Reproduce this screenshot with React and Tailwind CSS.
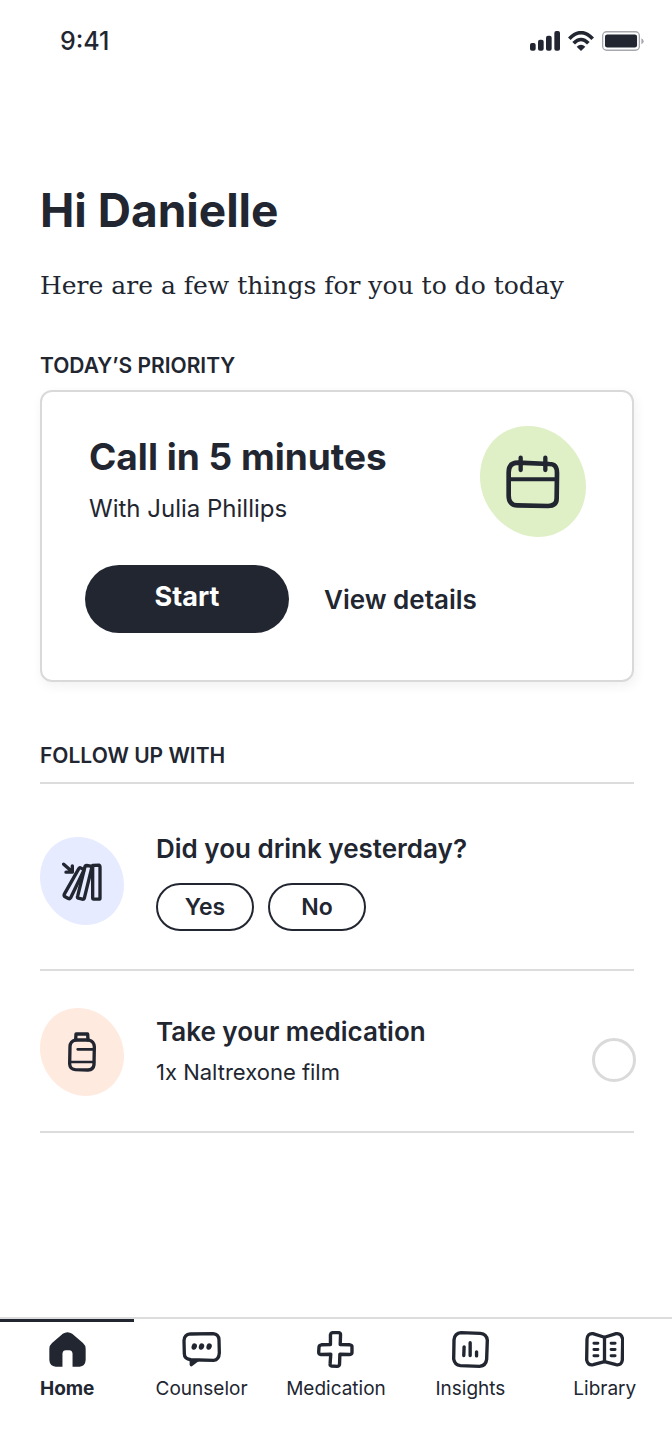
import { useState } from "react";
import clsx from "clsx";

const Blob = ({ className, fill, children }) => (
  <div className={clsx("grid shrink-0 place-items-center", className)}>
    <svg
      viewBox="0 0 106 111"
      preserveAspectRatio="none"
      className={clsx("col-start-1 row-start-1 h-full w-full", fill)}
      aria-hidden="true"
    >
      <path d="M48 0C79 0 106 28 106 61C106 89 85 111 58 111C27 111 0 82 0 51C0 22 20 0 48 0Z" />
    </svg>
    <div className="col-start-1 row-start-1">{children}</div>
  </div>
);

const CalendarIcon = () => (
  <svg viewBox="0 0 162 162" className="size-[54px]" fill="none" stroke="currentColor" strokeLinecap="round" strokeLinejoin="round" aria-hidden="true">
    <path strokeWidth="14" d="M36 23C16 23 8 33 8 52V122C8 141 18 151 34 151L126 153C144 153 152 145 152 130L153 54C153 36 147 27 130 27Z" />
    <path strokeWidth="12" d="M12 73H152" />
    <path strokeWidth="13" d="M44 8V45M118 8V45" />
  </svg>
);

const DominoIcon = () => (
  <svg viewBox="0 0 120 116" className="h-[39px] w-10" fill="none" stroke="currentColor" strokeWidth="10" strokeLinecap="round" strokeLinejoin="round" aria-hidden="true">
    <path d="M5 6L29 27M31 11V30H12" />
    <path d="M92 10L111 9Q114 10 114 14V108Q114 111 110 111L95 111Q92 111 92 107Z" />
    <path d="M69 13Q70 9 74 10L86 12Q90 14 89 18L67 108Q65 112 61 111L49 108Q45 106 47 102Z" />
    <path d="M50 20Q53 15 56 17L63 21Q66 24 64 28L26 107Q23 111 19 109L8 103Q5 100 7 96Z" />
  </svg>
);

const BottleIcon = () => (
  <svg viewBox="0 0 84 120" className="h-10 w-7" fill="none" stroke="currentColor" strokeWidth="10" strokeLinecap="round" strokeLinejoin="round" aria-hidden="true">
    <path d="M23 24L24 6H59L60 24" />
    <path d="M22 24H62Q78 28 79 44L78 98Q76 113 60 114L22 113Q6 112 5 96L6 43Q7 28 22 24Z" />
    <path strokeWidth="8" d="M29 52H78M7 90H78" />
  </svg>
);

const HomeIcon = () => (
  <svg viewBox="0 0 110 104" className="h-[35px] w-[37px]" fill="currentColor" aria-hidden="true">
    <path d="M41 5Q55 -4 69 5L101 33Q109 40 109 50V83Q108 101 91 103H70V64Q69 54 60 54H50Q41 54 40 64V103H20Q2 101 1 83V50Q1 40 9 33Z" />
  </svg>
);

const ChatIcon = () => (
  <svg viewBox="0 0 118 106" className="h-[35px] w-[39px]" fill="none" stroke="currentColor" strokeWidth="10" strokeLinejoin="round" aria-hidden="true">
    <path d="M25 6L94 5Q111 7 112 23L113 63Q112 84 96 86L27 84Q7 82 7 66L6 26Q7 8 25 6Z" />
    <path fill="currentColor" stroke="none" d="M23 84H56L30 104Q23 106 23 98Z" />
    <g fill="currentColor" stroke="none">
      <ellipse cx="37" cy="44" rx="8" ry="10" transform="rotate(18 37 44)" />
      <ellipse cx="59" cy="44" rx="8" ry="10" transform="rotate(18 59 44)" />
      <ellipse cx="82" cy="44" rx="8" ry="10" transform="rotate(18 82 44)" />
    </g>
  </svg>
);

const PlusIcon = () => (
  <svg viewBox="0 0 110 110" className="size-[37px]" fill="none" stroke="currentColor" strokeWidth="10" strokeLinejoin="round" aria-hidden="true">
    <path d="M46 5H65Q70 6 70 11L69 40L98 41Q105 42 104 48V64Q104 69 97 70L68 69L67 99Q66 105 60 105L43 104Q38 103 39 97L41 69L12 70Q5 69 5 63L6 47Q7 42 13 41L40 40V11Q41 6 46 5Z" />
  </svg>
);

const ChartIcon = () => (
  <svg viewBox="0 0 110 110" className="size-[37px]" fill="none" stroke="currentColor" strokeWidth="10" strokeLinecap="round" strokeLinejoin="round" aria-hidden="true">
    <path d="M27 5L84 7Q103 9 105 27L103 84Q101 103 82 105L25 103Q8 101 5 83L6 26Q8 7 27 5Z" />
    <path d="M36 47L35 73M54 35V73M73 62V74" />
  </svg>
);

const BookIcon = () => (
  <svg viewBox="0 0 118 106" className="h-[35px] w-[39px]" fill="none" stroke="currentColor" strokeWidth="10" strokeLinecap="round" strokeLinejoin="round" aria-hidden="true">
    <path d="M59 16L24 5Q7 4 6 22L5 85Q8 102 25 99L59 90L94 99Q111 102 113 85L114 22Q111 4 94 5Z" />
    <path d="M59 16V90" />
    <path strokeWidth="9" d="M27 34H39M27 53H39M27 72H39M79 34H91M79 53H91M79 72H91" />
  </svg>
);

const StatusBar = () => (
  <header className="flex h-[84px] items-center justify-between pr-7 pl-[60px]">
    <span className="text-[25px] font-medium">9:41</span>
    <div className="flex items-center gap-2 pb-0.5">
      <svg viewBox="0 0 90 60" className="h-5 w-[30px]" fill="currentColor" aria-hidden="true">
        <rect x="0" y="36" width="17" height="23" rx="6" />
        <rect x="24" y="26" width="17" height="33" rx="6" />
        <rect x="48" y="14" width="17" height="45" rx="6" />
        <rect x="73" y="0" width="17" height="59" rx="6" />
      </svg>
      <svg viewBox="0 0 78 60" className="h-5 w-[26px]" fill="none" stroke="currentColor" strokeWidth="11" aria-hidden="true">
        <path d="M4 23Q39 -13 74 23M17 37Q39 14 61 37" />
        <path fill="currentColor" stroke="none" d="M26 47Q39 36 52 47L39 60Z" />
      </svg>
      <svg viewBox="0 0 127 60" className="h-5 w-[42px]" aria-hidden="true">
        <rect x="2" y="2" width="111" height="56" rx="12" fill="none" stroke="#a6a8ad" strokeWidth="4" />
        <rect x="9" y="10" width="97" height="40" rx="7" fill="currentColor" />
        <path d="M119 22Q126 25 126 31Q126 37 119 40Z" fill="#a6a8ad" />
      </svg>
    </div>
  </header>
);

const PriorityCard = () => (
  <section className="mt-3 rounded-xl border-2 border-[#d9d9d9] pt-[34px] pr-[46px] pb-[47px] pl-[43px] shadow-[2px_4px_12px_rgba(0,0,0,0.06)]">
    <div className="flex items-start justify-between">
      <div className="pt-[7px] pl-1">
        <h3 className="text-[37px] leading-[48px] font-bold">Call in 5 minutes</h3>
        <p className="mt-3 text-[24px] leading-8">With Julia Phillips</p>
      </div>
      <Blob className="h-[111px] w-[106px]" fill="fill-[#dff0c6]">
        <CalendarIcon />
      </Blob>
    </div>
    <div className="mt-7 flex items-center gap-[35px]">
      <button type="button" className="h-[68px] w-[204px] rounded-full bg-[#212631] pb-1 text-[27px] font-bold text-white">
        Start
      </button>
      <a href="#details" className="text-[26px] font-semibold">
        View details
      </a>
    </div>
  </section>
);

const answers = ["Yes", "No"];

const DrinkRow = () => {
  const [answer, setAnswer] = useState(null);

  return (
    <li className="flex border-b-2 border-[#dcdcdc] pt-[49px] pb-[38px]">
      <Blob className="mt-1 h-[88px] w-[84px]" fill="fill-[#e6ebff]">
        <DominoIcon />
      </Blob>
      <div className="ml-8">
        <h3 className="text-[26px] leading-8 font-semibold">Did you drink yesterday?</h3>
        <div className="mt-[18px] flex gap-3.5">
          {answers.map((item) => (
            <button
              key={item}
              type="button"
              aria-pressed={answer === item}
              onClick={() => setAnswer(item)}
              className="h-12 w-[98px] rounded-full border-2 border-[#212631] text-[23px] font-semibold"
            >
              {item}
            </button>
          ))}
        </div>
      </div>
    </li>
  );
};

const MedicationRow = () => (
  <li className="flex items-center border-b-2 border-[#dcdcdc] pt-[37px] pb-[35px]">
    <Blob className="h-[88px] w-[84px]" fill="fill-[#ffeae0]">
      <BottleIcon />
    </Blob>
    <label htmlFor="medication" className="ml-8 flex-1">
      <span className="block text-[26px] leading-8 font-semibold">Take your medication</span>
      <span className="mt-2 block text-[22px] leading-8">1x Naltrexone film</span>
    </label>
    <input
      id="medication"
      type="checkbox"
      className="mt-4 -mr-0.5 size-11 shrink-0 appearance-none rounded-full border-3 border-[#dadada] checked:bg-[#212631]"
    />
  </li>
);

const tabs = [
  { label: "Home", icon: HomeIcon, active: true },
  { label: "Counselor", icon: ChatIcon },
  { label: "Medication", icon: PlusIcon },
  { label: "Insights", icon: ChartIcon },
  { label: "Library", icon: BookIcon },
];

const TabBar = () => (
  <nav className="grid h-[137px] grid-cols-5 border-t-2 border-[#dcdcdc]">
    {tabs.map(({ label, icon: Icon, active }) => (
      <a
        key={label}
        href={`#${label.toLowerCase()}`}
        aria-current={active ? "page" : undefined}
        className={clsx(
          "flex flex-col items-center border-t-[3px] pt-[7px]",
          active ? "border-[#212631] font-bold" : "border-transparent"
        )}
      >
        <span className="flex h-10 items-center">
          <Icon />
        </span>
        <span className="mt-2 text-[19px] leading-6">{label}</span>
      </a>
    ))}
  </nav>
);

const App = () => {
  return (
    <div className="flex min-h-screen flex-col bg-white font-['Inter',sans-serif] text-[#212631]">
      <StatusBar />
      <main className="flex-1 pr-[38px] pb-10 pl-10">
        <h1 className="mt-[98px] text-[46px] leading-[56px] font-bold">Hi Danielle</h1>
        <p className="mt-7 font-['DejaVu_Serif',serif] text-[25px] leading-10">
          Here are a few things for you to do today
        </p>
        <h2 className="mt-12 text-[21px] leading-6 font-semibold">TODAY’S PRIORITY</h2>
        <PriorityCard />
        <h2 className="mt-[62px] text-[21px] leading-6 font-semibold">FOLLOW UP WITH</h2>
        <ul className="mt-3.5 border-t-2 border-[#dcdcdc]">
          <DrinkRow />
          <MedicationRow />
        </ul>
      </main>
      <TabBar />
    </div>
  );
};

export default App;
